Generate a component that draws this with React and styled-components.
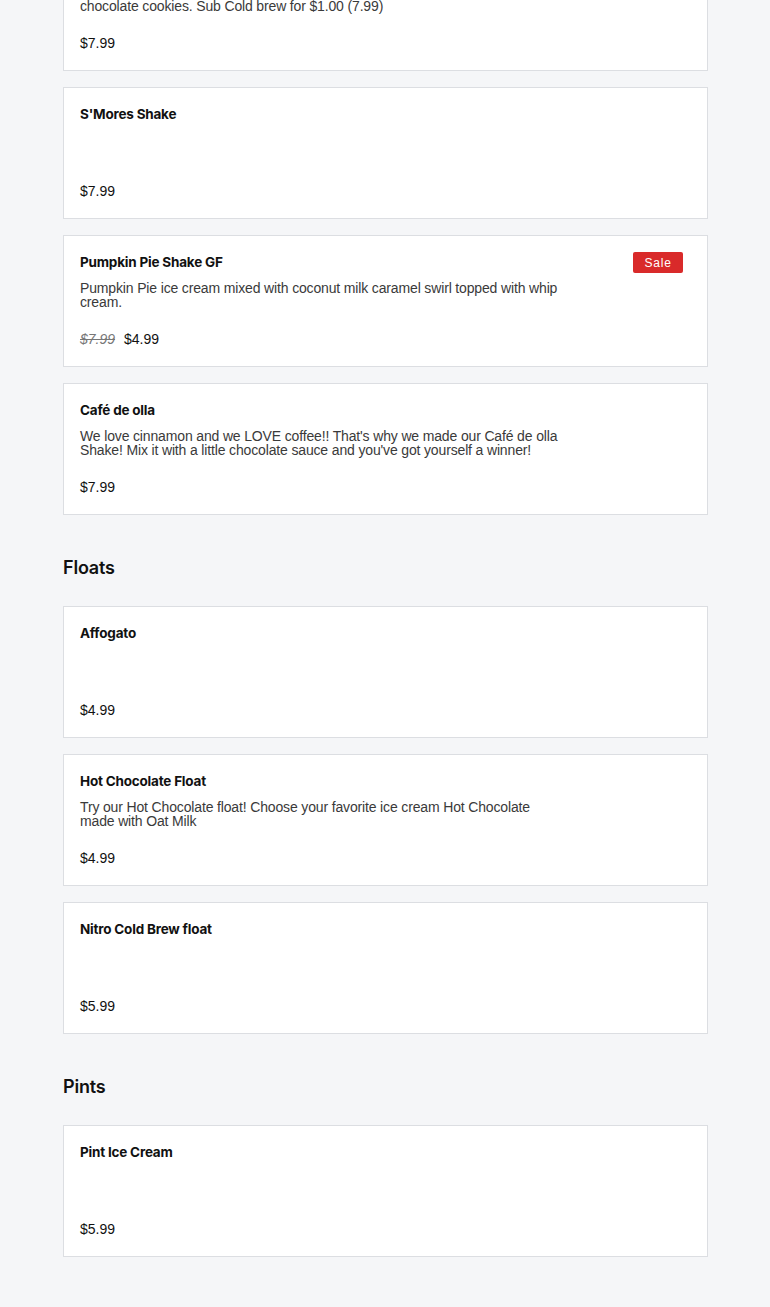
import styled, { createGlobalStyle } from "styled-components";

const Global = createGlobalStyle`
  html, body {
    margin: 0;
    padding: 0;
    background: #f5f6f8;
  }
  body {
    font-family: "Liberation Sans", Arial, sans-serif;
    color: #111;
  }
`;

const Page = styled.main`
  width: 645px;
  margin: -61px 0 0 63px;
  padding-bottom: 50px;
  display: flex;
  flex-direction: column;
`;

const Section = styled.section`
  display: flex;
  flex-direction: column;
  gap: 16px;
  & + & {
    margin-top: 41px;
  }
`;

const Heading = styled.h2`
  margin: 0 0 10px;
  font-family: "Inter", "Lato", sans-serif;
  font-weight: 600;
  font-size: 18px;
  line-height: 24px;
  letter-spacing: -0.2px;
  color: #111;
`;

const Card = styled.article`
  position: relative;
  box-sizing: border-box;
  height: 132px;
  background: #fff;
  border: 1px solid #dcdee2;
  padding: 19px 16px 18px;
  display: flex;
  flex-direction: column;
`;

const Title = styled.h3`
  margin: 0;
  font-family: "Inter", "Lato", sans-serif;
  font-weight: 700;
  font-size: 13.5px;
  line-height: 14px;
  letter-spacing: -0.2px;
  color: #111;
`;

const Desc = styled.p`
  margin: 12px 0 0;
  max-width: 482px;
  font-size: 14px;
  line-height: 14px;
  letter-spacing: -0.15px;
  color: #3a3a3a;
`;

const PriceRow = styled.div`
  margin-top: auto;
  display: flex;
  align-items: center;
  gap: 9px;
  font-size: 14px;
  line-height: 18px;
`;

const Old = styled.span`
  color: #777;
  font-style: italic;
  text-decoration: line-through;
`;

const Price = styled.span`
  color: #111;
`;

const Badge = styled.span`
  position: absolute;
  top: 16px;
  right: 24px;
  width: 50px;
  height: 21px;
  border-radius: 2px;
  background: #d92a2a;
  color: #fff;
  font-size: 12px;
  letter-spacing: 0.8px;
  display: flex;
  align-items: center;
  justify-content: center;
`;

const menu = [
  {
    items: [
      {
        name: "Cookie Monster Shake",
        desc: "Cookie Monster ice cream blended with oat milk and topped with crushed chocolate cookies. Sub Cold brew for $1.00 (7.99)",
        price: "$7.99",
      },
      { name: "S'Mores Shake", price: "$7.99" },
      {
        name: "Pumpkin Pie Shake GF",
        desc: "Pumpkin Pie ice cream mixed with coconut milk caramel swirl topped with whip cream.",
        old: "$7.99",
        price: "$4.99",
        sale: true,
      },
      {
        name: "Café de olla",
        desc: "We love cinnamon and we LOVE coffee!! That's why we made our Café de olla Shake! Mix it with a little chocolate sauce and you've got yourself a winner!",
        price: "$7.99",
      },
    ],
  },
  {
    title: "Floats",
    items: [
      { name: "Affogato", price: "$4.99" },
      {
        name: "Hot Chocolate Float",
        desc: "Try our Hot Chocolate float! Choose your favorite ice cream Hot Chocolate made with Oat Milk",
        price: "$4.99",
      },
      { name: "Nitro Cold Brew float", price: "$5.99" },
    ],
  },
  {
    title: "Pints",
    items: [{ name: "Pint Ice Cream", price: "$5.99" }],
  },
];

export default function App() {
  return (
    <>
      <Global />
      <Page>
        {menu.map((sec, i) => (
          <Section key={i}>
            {sec.title && <Heading>{sec.title}</Heading>}
            {sec.items.map((it) => (
              <Card key={it.name}>
                <Title>{it.name}</Title>
                {it.desc && <Desc>{it.desc}</Desc>}
                <PriceRow>
                  {it.old && <Old>{it.old}</Old>}
                  <Price>{it.price}</Price>
                </PriceRow>
                {it.sale && <Badge>Sale</Badge>}
              </Card>
            ))}
          </Section>
        ))}
      </Page>
    </>
  );
}
